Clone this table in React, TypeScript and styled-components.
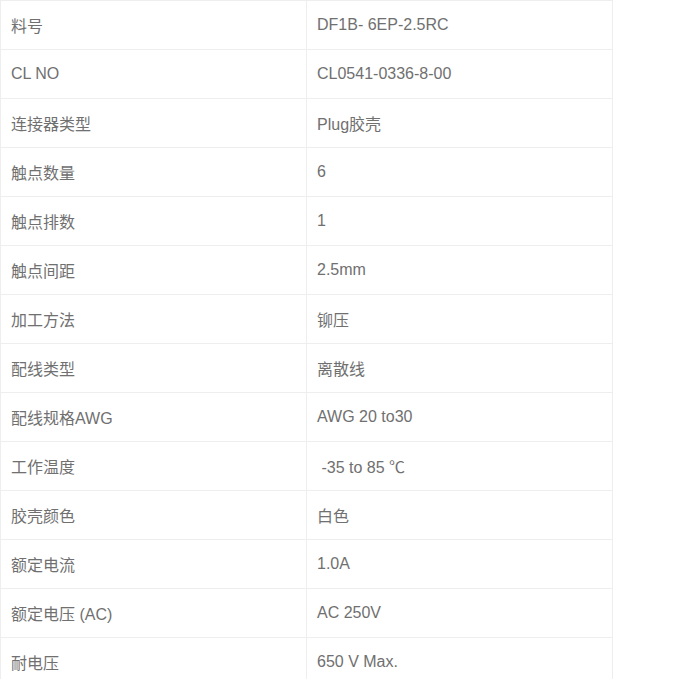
import React from "react";
import styled, { createGlobalStyle } from "styled-components";

const GlobalStyle = createGlobalStyle`
  html, body {
    margin: 0;
    padding: 0;
    background: #ffffff;
  }
  body {
    font-family: "Liberation Sans", Arial, "Noto Sans CJK SC", sans-serif;
  }
`;

const SpecTable = styled.div`
  display: grid;
  grid-template-columns: 306px 306px;
  width: 613px;
  border-top: 1px solid #eeeeee;
  border-left: 1px solid #eeeeee;
  box-sizing: border-box;
`;

const Cell = styled.div`
  box-sizing: border-box;
  height: 49px;
  display: flex;
  align-items: center;
  padding: 0 10px;
  border-right: 1px solid #eeeeee;
  border-bottom: 1px solid #eeeeee;
  font-family: "Liberation Sans", Arial, "Noto Sans CJK SC", sans-serif;
  font-size: 16px;
  color: #707070;
  white-space: pre;
`;

const rows: [string, string][] = [
  ["料号", "DF1B- 6EP-2.5RC"],
  ["CL NO", "CL0541-0336-8-00"],
  ["连接器类型", "Plug胶壳"],
  ["触点数量", "6"],
  ["触点排数", "1"],
  ["触点间距", "2.5mm"],
  ["加工方法", "铆压"],
  ["配线类型", "离散线"],
  ["配线规格AWG", "AWG 20 to30"],
  ["工作温度", " -35 to 85 ℃"],
  ["胶壳颜色", "白色"],
  ["额定电流", "1.0A"],
  ["额定电压 (AC)", "AC 250V"],
  ["耐电压", "650 V Max."],
];

export default function App() {
  return (
    <>
      <GlobalStyle />
      <SpecTable>
        {rows.map(([k, v]) => (
          <React.Fragment key={k}>
            <Cell>{k}</Cell>
            <Cell>{v}</Cell>
          </React.Fragment>
        ))}
      </SpecTable>
    </>
  );
}
